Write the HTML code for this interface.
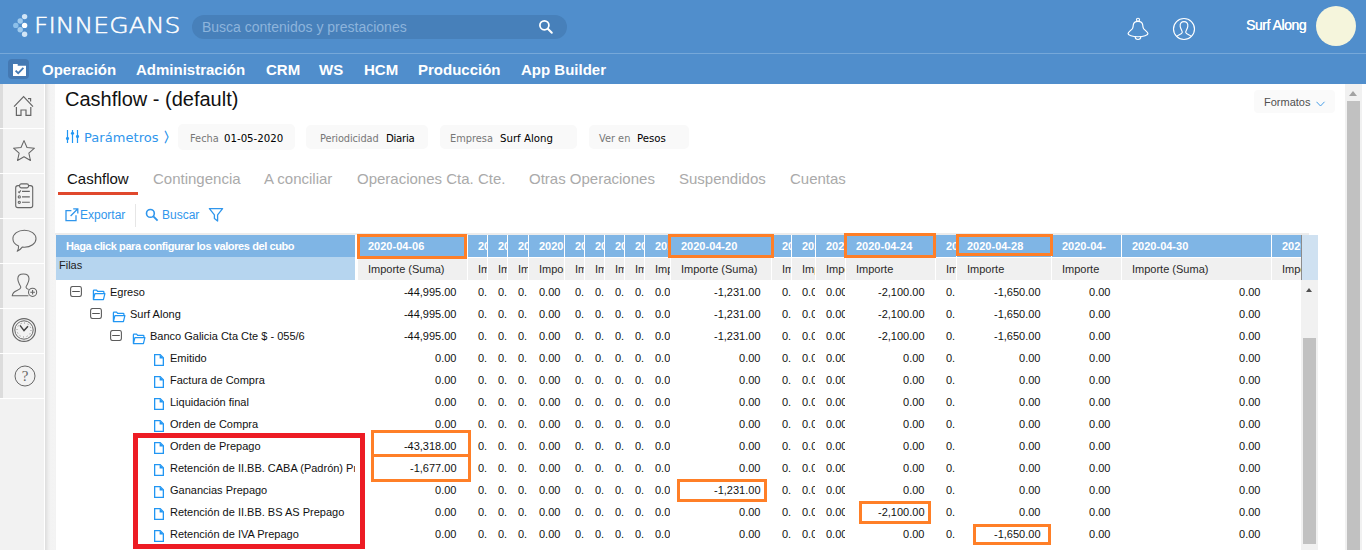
<!DOCTYPE html>
<html lang="es">
<head>
<meta charset="utf-8">
<title>Cashflow - (default)</title>
<style>
html,body{margin:0;padding:0;}
body{width:1366px;height:550px;overflow:hidden;background:#fff;position:relative;font-family:"Liberation Sans",Arial,sans-serif;font-size:12px;color:#111;}
.abs{position:absolute;}
#top{position:absolute;left:0;top:0;width:1366px;height:84px;background:#508ecc;}
#topline{position:absolute;left:0;top:53px;width:1366px;height:1px;background:#76a8d9;}
#logo{position:absolute;left:34px;top:12px;font-family:"DejaVu Sans Light","DejaVu Sans",sans-serif;font-weight:200;font-size:20.4px;line-height:28px;color:#fff;letter-spacing:0px;white-space:nowrap;transform:scaleX(1.23);transform-origin:0 0;-webkit-text-stroke:0.45px #fff;}
#search{position:absolute;left:192px;top:15px;width:375px;height:24px;border-radius:12px;background:#4780ba;}
#search span{position:absolute;left:10px;top:0;line-height:24px;font-size:14px;color:#8db4dc;white-space:nowrap;}
#nav{position:absolute;left:42px;top:54px;height:30px;line-height:31px;font-weight:bold;font-size:15px;color:#fff;white-space:nowrap;}
#nav span{position:absolute;top:0;}
#chk{position:absolute;left:8px;top:59px;width:21px;height:20px;border-radius:4px;background:#4479b3;}
#uname{position:absolute;left:1246px;top:16px;font-size:14px;line-height:18px;color:#fff;white-space:nowrap;letter-spacing:-0.45px;text-shadow:0.15px 0 0 #fff;}
#avatar{position:absolute;left:1316px;top:6px;width:40px;height:40px;border-radius:50%;background:#f5f5dc;}
/* sidebar */
#side{position:absolute;left:0;top:84px;width:44px;height:466px;background:#f2f2f2;}
#sidestrip{position:absolute;left:0;top:84px;width:3px;height:314px;background:#dcdcdc;}
#sideshadow{position:absolute;left:44px;top:84px;width:11px;height:466px;background:linear-gradient(to right,#fff 0,#fff 1px,#dedede 1px,#e4e4e4 2.5px,#eeeeee 4.5px,#f3f3f3 6.5px,#f4f4f4 11px);}
.sline{position:absolute;left:0;width:44px;height:1px;background:#fff;}
.sico{position:absolute;left:3px;width:41px;height:44px;}
/* title */
#title{position:absolute;left:65px;top:86px;font-size:20px;line-height:26px;color:#111;white-space:nowrap;}
#fmt{position:absolute;left:1254px;top:90px;width:81px;height:23px;border-radius:4px;background:#fafafa;}
#fmt span{position:absolute;left:10px;top:0;line-height:24px;font-size:11px;color:#505050;}
.vd{font-family:"DejaVu Sans",Verdana,sans-serif;}
#params{position:absolute;left:84px;top:129px;font-size:13px;line-height:18px;color:#3096ec;white-space:nowrap;letter-spacing:0.05px;}
#params i{font-style:normal;position:absolute;left:78.5px;top:-1px;font-size:14px;-webkit-text-stroke:0.5px #3096ec;}
.chip{position:absolute;top:125px;height:24px;border-radius:5px;background:#f9f9f9;}
.chip .k{position:absolute;top:0;line-height:28px;font-size:9.8px;color:#777;white-space:nowrap;}
.chip .v{position:absolute;top:0;line-height:28px;font-size:10.2px;color:#000;white-space:nowrap;}
.tab{position:absolute;top:169px;font-size:15px;line-height:20px;color:#aaa;white-space:nowrap;}
#tabline{position:absolute;left:58px;top:192px;width:80px;height:3px;background:#e0482d;}
.tb{position:absolute;top:207px;font-size:12px;line-height:17px;color:#3096ec;white-space:nowrap;}
#tbsep{position:absolute;left:135px;top:204px;width:1px;height:23px;background:#e6e6e6;}
/* grid */
#gtop{position:absolute;left:55px;top:233px;width:1254px;height:2px;background:#ececec;}
#gh1{position:absolute;left:56px;top:235px;width:299px;height:22px;background:#7fb5e5;color:#fff;font-weight:bold;font-size:11px;line-height:22px;letter-spacing:-0.4px;}
#gh1 span{position:absolute;left:10px;white-space:nowrap;}
#gh2{position:absolute;left:56px;top:257px;width:299px;height:23px;background:#b6d5ef;font-size:11px;}
#gh2 span{position:absolute;left:3px;top:1px;line-height:14px;color:#222;}
.h1{position:absolute;top:235px;height:22px;line-height:22px;background:#7fb5e5;color:#fff;font-weight:bold;font-size:11px;overflow:hidden;}
.h1 span,.h2 span{display:block;margin:0 10px;}
.h2{position:absolute;top:258px;height:22px;line-height:23px;background:#f0f0f0;color:#2a2a2a;font-size:11px;overflow:hidden;white-space:nowrap;}
#corner{position:absolute;left:1301px;top:235px;width:17px;height:46px;background:#cfe1f1;border-left:1px solid #8c8c8c;border-bottom:1px solid #a3c6e6;box-sizing:border-box;}
.row{position:absolute;left:0;width:1301px;height:22px;font-size:11px;}
.row .lbl{position:absolute;top:0;height:22px;line-height:22px;overflow:hidden;white-space:nowrap;color:#111;}
.row .c{position:absolute;top:0;height:22px;line-height:22px;overflow:hidden;white-space:nowrap;box-sizing:border-box;padding-left:10px;color:#111;}
.row .c.w{text-align:right;padding-right:10.5px;}
.exp{position:absolute;top:5px;}
.fold{position:absolute;top:8px;}
.file{position:absolute;top:7px;}
.ob{position:absolute;box-sizing:border-box;border:3px solid #ff7f27;}
#red{position:absolute;left:133px;top:433px;width:232px;height:116px;box-sizing:border-box;border:5px solid #ed1c24;}
/* scrollbars */
#isb{position:absolute;left:1301px;top:280px;width:17px;height:270px;background:#f1f1f1;}
#isbthumb{position:absolute;left:1303px;top:338px;width:13px;height:206px;background:#c1c1c1;}
#msb{position:absolute;left:1345px;top:84px;width:17px;height:466px;background:#f1f1f1;}
#msbthumb{position:absolute;left:1347px;top:101px;width:13px;height:449px;background:#c1c1c1;}
.arr{position:absolute;width:0;height:0;border-left:4px solid transparent;border-right:4px solid transparent;}
</style>
</head>
<body>
<div id="top"></div>
<div id="topline"></div>
<svg class="abs" style="left:12px;top:12px" width="18" height="28" viewBox="0 0 18 28">
  <circle cx="12.6" cy="4.6" r="2.7" fill="#d2e5f6"/>
  <circle cx="8.2" cy="9" r="2.7" fill="#a0cbee"/>
  <circle cx="3.8" cy="13.4" r="2.7" fill="#8dc0ea"/>
  <circle cx="12.6" cy="13.4" r="2.7" fill="#ffffff"/>
  <circle cx="8.2" cy="17.8" r="2.7" fill="#a0cbee"/>
  <circle cx="12.6" cy="22.2" r="2.7" fill="#d2e5f6"/>
</svg>
<div id="logo">FINNEGANS</div>
<div id="search"><span>Busca contenidos y prestaciones</span>
<svg class="abs" style="left:346px;top:4px" width="16" height="16" viewBox="0 0 16 16"><circle cx="6.4" cy="6.3" r="4.5" fill="none" stroke="#fff" stroke-width="1.75"/><path d="M9.8 9.7L13.8 13.7" stroke="#fff" stroke-width="2" stroke-linecap="round"/></svg>
</div>
<svg class="abs" style="left:1120px;top:10px" width="84" height="36" viewBox="1120 10 84 36" fill="none" stroke="#fff" stroke-width="1.15" stroke-linejoin="round">
<circle cx="1138" cy="19.8" r="1.55"/>
<path d="M1138 21.3C1135.6 21.3 1133.6 22.6 1133.3 24.8C1133 26.8 1133.2 27.6 1132.2 28.8C1130.6 30.6 1128.4 32 1128.1 33.4C1127.8 35.2 1132.4 36.7 1138 36.7C1143.6 36.7 1148.2 35.2 1147.9 33.4C1147.6 32 1145.4 30.6 1143.8 28.8C1142.8 27.6 1143 26.8 1142.7 24.8C1142.4 22.6 1140.4 21.3 1138 21.3Z"/>
<path d="M1135.2 36.8C1135.2 40.4 1140.8 40.4 1140.8 36.8"/>
<circle cx="1184" cy="29" r="10.5"/>
<path d="M1176.7 36.3C1178.4 34.8 1181.6 34.2 1182.2 32.6C1182.7 31.2 1180.6 29.4 1180.2 26.4C1179.8 23.4 1181.4 21.6 1184 21.6C1186.6 21.6 1188.2 23.4 1187.8 26.4C1187.4 29.4 1185.3 31.2 1185.8 32.6C1186.4 34.2 1189.6 34.8 1191.3 36.3"/>
</svg>
<div id="uname">Surf Along</div>
<div id="avatar"></div>
<div id="chk"></div>
<svg class="abs" style="left:13px;top:64px" width="13" height="12" viewBox="0 0 13 12"><path d="M0 0H4.7V1.7H13V12H0Z" fill="#fff"/><path d="M2.6 6.6L5.2 9.2L10.4 3.8" fill="none" stroke="#4479b3" stroke-width="1.8"/></svg>
<div id="nav"><span style="left:0">Operación</span><span style="left:94px">Administración</span><span style="left:224px">CRM</span><span style="left:277px">WS</span><span style="left:322px">HCM</span><span style="left:376px">Producción</span><span style="left:479px">App Builder</span></div>

<div id="side"></div>
<div id="sidestrip"></div>
<div id="sideshadow"></div>
<div class="sline" style="top:128px"></div>
<div class="sline" style="top:173px"></div>
<div class="sline" style="top:218px"></div>
<div class="sline" style="top:263px"></div>
<div class="sline" style="top:308px"></div>
<div class="sline" style="top:353px"></div>
<div class="sline" style="top:398px"></div>
<!-- sidebar icons -->
<svg class="abs" style="left:12px;top:94px" width="24" height="24" viewBox="0 0 24 24" fill="none" stroke="#666" stroke-width="1.2"><path d="M2 12.6L11.6 2.6L21 12.6"/><path d="M4.4 13V21.4H9V16H14V21.4H18.8V13"/><path d="M16 4.6H18.6V7.4"/></svg>
<svg class="abs" style="left:11px;top:138px" width="26" height="26" viewBox="0 0 26 26" fill="none" stroke="#666" stroke-width="1.05" stroke-linejoin="round"><path d="M13.00 2.60L16.00 9.47L23.46 10.20L17.85 15.18L19.47 22.50L13.00 18.70L6.53 22.50L8.15 15.18L2.54 10.20L10.00 9.47Z"/></svg>
<svg class="abs" style="left:14px;top:183px" width="20" height="26" viewBox="0 0 20 26" fill="none" stroke="#666" stroke-width="1.1"><rect x="1.7" y="2.6" width="17" height="22" rx="2.2"/><rect x="5.6" y="0.9" width="8.9" height="4" rx="1.6" fill="#f2f2f2"/><path d="M4.2 8.6L5.2 9.6L6.8 7.4M8 8.4H15.8M8 13.9H15.8M8 19.3H15.8"/><circle cx="5.3" cy="13.9" r="1.1"/><circle cx="5.3" cy="19.3" r="1.1"/></svg>
<svg class="abs" style="left:4px;top:220px" width="40" height="86" viewBox="4 220 40 86" fill="none" stroke="#666" stroke-width="1.05" stroke-linejoin="round"><path d="M18.6 245.9C14.8 244.4 12.9 241.8 12.9 238.7C12.9 234 18 230.2 24.4 230.2C30.8 230.2 36 234 36 238.7C36 243.4 30.8 247.2 24.4 247.2C23.6 247.2 22.9 247.2 22.2 247.1C21 248.8 19.4 250.4 17.2 251.2C18.2 249.6 18.7 247.6 18.6 245.9Z"/><path d="M28.4 295.8H12.2C12.6 292.4 14.4 291.4 17 290.4C19.2 289.6 20.6 288.8 20.8 287.2C20.9 286.4 20.2 285.6 19.4 284.2C18.4 282.4 17.8 280.4 17.8 278.8C17.8 275.8 20.2 274 23.4 274C26.6 274 29 275.8 29 278.8C29 280.4 28.4 282.4 27.4 284.2C26.6 285.6 25.9 286.4 26 287.2C26.1 288.2 27 288.8 28.6 289.4"/><circle cx="32.6" cy="292.3" r="4.1" fill="#f2f2f2"/><path d="M30.3 292.3H34.9M32.6 290V294.6" stroke-width="1.1"/></svg>
<svg class="abs" style="left:11.4px;top:317.4px" width="26" height="26" viewBox="0 0 26 26" fill="none" stroke="#666"><circle cx="13" cy="13" r="11.4" stroke-width="1.2"/><circle cx="13" cy="13" r="9.2" stroke-width="1"/><path d="M9 8.4L13 13.6L17 9.2" stroke-width="1.5" stroke="#444"/><circle cx="13" cy="13" r="7" stroke-width="1" stroke-dasharray="0.8 2.87"/></svg>
<svg class="abs" style="left:13px;top:363.6px" width="24" height="24" viewBox="0 0 24 24" fill="none" stroke="#666" stroke-width="1"><circle cx="12" cy="12" r="10"/></svg>
<div class="abs" style="left:13px;top:363.6px;width:24px;height:24px;line-height:25px;text-align:center;font-family:'Liberation Serif',serif;font-size:15px;color:#666;">?</div>

<div id="title">Cashflow - (default)</div>
<div id="fmt"><span>Formatos</span><svg class="abs" style="left:62px;top:10.5px" width="10" height="7" viewBox="0 0 10 7"><path d="M0.5 0.8L4.5 5L8.5 0.8" fill="none" stroke="#3f9ae6" stroke-width="0.95"/></svg></div>

<svg class="abs" style="left:60px;top:122px" width="24" height="24" viewBox="0 0 24 24" stroke="#2196f3" fill="none" stroke-width="1.2"><path d="M7.5 8V21M12.5 8V21M17.5 8V21"/><circle cx="7.5" cy="16.4" r="1.55" fill="#2196f3" stroke="none"/><circle cx="12.5" cy="11.3" r="1.55" fill="#2196f3" stroke="none"/><circle cx="17.5" cy="14.4" r="1.55" fill="#2196f3" stroke="none"/></svg>
<div id="params" class="vd">Parámetros <i>〉</i></div>
<div class="chip vd" style="left:178px;width:117px;top:124px;height:26px"><span class="k" style="left:12px;line-height:30px">Fecha</span><span class="v" style="left:46px;line-height:30px">01-05-2020</span></div>
<div class="chip vd" style="left:306px;width:122px"><span class="k" style="left:14px;letter-spacing:-0.1px">Periodicidad</span><span class="v" style="left:80px;letter-spacing:-0.3px">Diaria</span></div>
<div class="chip vd" style="left:440px;width:137px"><span class="k" style="left:10px">Empresa</span><span class="v" style="left:60px">Surf Along</span></div>
<div class="chip vd" style="left:589px;width:100px"><span class="k" style="left:10px">Ver en</span><span class="v" style="left:48px">Pesos</span></div>

<div class="tab" style="left:67px;color:#111">Cashflow</div>
<div class="tab" style="left:153px">Contingencia</div>
<div class="tab" style="left:264px">A conciliar</div>
<div class="tab" style="left:357px">Operaciones Cta. Cte.</div>
<div class="tab" style="left:529px">Otras Operaciones</div>
<div class="tab" style="left:679px">Suspendidos</div>
<div class="tab" style="left:790px">Cuentas</div>
<div id="tabline"></div>

<svg class="abs" style="left:65px;top:208px" width="14" height="14" viewBox="0 0 14 14" fill="none" stroke="#3096ec" stroke-width="1.3"><path d="M6.4 2.6H1V12.6H11V7.2"/><path d="M5.6 8L12.6 1M8.2 0.8H12.8V5.4"/></svg>
<div class="tb" style="left:80px">Exportar</div>
<div id="tbsep"></div>
<svg class="abs" style="left:145px;top:208px" width="14" height="14" viewBox="0 0 14 14" fill="none" stroke="#3096ec"><circle cx="5.4" cy="5.4" r="3.9" stroke-width="1.6"/><path d="M8.4 8.4L12.6 12.6" stroke-width="1.9"/></svg>
<div class="tb" style="left:162px">Buscar</div>
<svg class="abs" style="left:208px;top:207px" width="16" height="16" viewBox="0 0 16 16" fill="none" stroke="#3096ec" stroke-width="1.3" stroke-linejoin="round"><path d="M1.4 1.6H14.6L9.6 7.8V14L6.4 11.6V7.8Z"/></svg>

<div class="abs" style="left:55px;top:235px;width:1px;height:315px;background:#f3f3f3"></div>
<div id="gtop"></div>
<div id="gh1"><span>Haga click para configurar los valores del cubo</span></div>
<div id="gh2"><span>Filas</span></div>
<div class="h1" style="left:358px;width:109px"><span>2020-04-06</span></div>
<div class="h2" style="left:358px;width:109px"><span>Importe (Suma)</span></div>
<div class="h1" style="left:468px;width:19px"><span>2020-04-07</span></div>
<div class="h2" style="left:468px;width:19px"><span>Importe (Suma)</span></div>
<div class="h1" style="left:488px;width:19px"><span>2020-04-08</span></div>
<div class="h2" style="left:488px;width:19px"><span>Importe (Suma)</span></div>
<div class="h1" style="left:508px;width:20px"><span>2020-04-09</span></div>
<div class="h2" style="left:508px;width:20px"><span>Importe (Suma)</span></div>
<div class="h1" style="left:529px;width:35px"><span>2020-04-13</span></div>
<div class="h2" style="left:529px;width:35px"><span>Importe (Suma)</span></div>
<div class="h1" style="left:565px;width:19px"><span>2020-04-14</span></div>
<div class="h2" style="left:565px;width:19px"><span>Importe (Suma)</span></div>
<div class="h1" style="left:585px;width:19px"><span>2020-04-15</span></div>
<div class="h2" style="left:585px;width:19px"><span>Importe (Suma)</span></div>
<div class="h1" style="left:605px;width:19px"><span>2020-04-16</span></div>
<div class="h2" style="left:605px;width:19px"><span>Importe (Suma)</span></div>
<div class="h1" style="left:625px;width:19px"><span>2020-04-17</span></div>
<div class="h2" style="left:625px;width:19px"><span>Importe (Suma)</span></div>
<div class="h1" style="left:645px;width:25px"><span>2020-04-19</span></div>
<div class="h2" style="left:645px;width:25px"><span>Importe (Suma)</span></div>
<div class="h1" style="left:671px;width:100px"><span>2020-04-20</span></div>
<div class="h2" style="left:671px;width:100px"><span>Importe (Suma)</span></div>
<div class="h1" style="left:772px;width:19px"><span>2020-04-21</span></div>
<div class="h2" style="left:772px;width:19px"><span>Importe (Suma)</span></div>
<div class="h1" style="left:792px;width:23px"><span>2020-04-22</span></div>
<div class="h2" style="left:792px;width:23px"><span>Importe (Suma)</span></div>
<div class="h1" style="left:816px;width:29px"><span>2020-04-23</span></div>
<div class="h2" style="left:816px;width:29px"><span>Importe (Suma)</span></div>
<div class="h1" style="left:846px;width:89px"><span>2020-04-24</span></div>
<div class="h2" style="left:846px;width:89px"><span>Importe</span></div>
<div class="h1" style="left:936px;width:20px"><span>2020-04-27</span></div>
<div class="h2" style="left:936px;width:20px"><span>Importe</span></div>
<div class="h1" style="left:957px;width:94px"><span>2020-04-28</span></div>
<div class="h2" style="left:957px;width:94px"><span>Importe</span></div>
<div class="h1" style="left:1052px;width:69px"><span>2020-04-29</span></div>
<div class="h2" style="left:1052px;width:69px"><span>Importe</span></div>
<div class="h1" style="left:1122px;width:149px"><span>2020-04-30</span></div>
<div class="h2" style="left:1122px;width:149px"><span>Importe (Suma)</span></div>
<div class="h1" style="left:1272px;width:29px"><span>2020-05-04</span></div>
<div class="h2" style="left:1272px;width:29px"><span>Importe (Suma)</span></div>
<div class="row" style="top:281px">
<svg class="exp" style="left:70px" width="12" height="11" viewBox="0 0 12 11"><rect x="0.6" y="0.5" width="10.8" height="10" rx="2" fill="#fff" stroke="#5c5c5c" stroke-width="1.1"/><path d="M2.2 5.5H9.8" stroke="#555" stroke-width="1"/></svg>
<svg class="fold" style="left:92px" width="14" height="12" viewBox="0 0 14 12"><path d="M1.4 10.6V1.8Q1.4 1.1 2.1 1.1H4.6L5.6 2.3H11.2Q11.9 2.3 11.9 3V4.4M1.4 10.6L2.9 4.6H12.9L11.4 10.6Z" fill="none" stroke="#2196f3" stroke-width="1.25" stroke-linejoin="round"/></svg>
<div class="lbl" style="left:110px;width:245px">Egreso</div>
<div class="c w" style="left:358px;width:109px">-44,995.00</div>
<div class="c" style="left:468px;width:19px">0.00</div>
<div class="c" style="left:488px;width:19px">0.00</div>
<div class="c" style="left:508px;width:19px">0.00</div>
<div class="c" style="left:529px;width:35px">0.00</div>
<div class="c" style="left:565px;width:19px">0.00</div>
<div class="c" style="left:585px;width:19px">0.00</div>
<div class="c" style="left:605px;width:19px">0.00</div>
<div class="c" style="left:625px;width:19px">0.00</div>
<div class="c" style="left:645px;width:25px">0.00</div>
<div class="c w" style="left:671px;width:100px">-1,231.00</div>
<div class="c" style="left:772px;width:19px">0.00</div>
<div class="c" style="left:792px;width:23px">0.00</div>
<div class="c" style="left:816px;width:29px">0.00</div>
<div class="c w" style="left:846px;width:89px">-2,100.00</div>
<div class="c" style="left:936px;width:19px">0.00</div>
<div class="c w" style="left:957px;width:94px">-1,650.00</div>
<div class="c w" style="left:1052px;width:69px">0.00</div>
<div class="c w" style="left:1122px;width:149px">0.00</div>
</div>
<div class="row" style="top:303px">
<svg class="exp" style="left:90px" width="12" height="11" viewBox="0 0 12 11"><rect x="0.6" y="0.5" width="10.8" height="10" rx="2" fill="#fff" stroke="#5c5c5c" stroke-width="1.1"/><path d="M2.2 5.5H9.8" stroke="#555" stroke-width="1"/></svg>
<svg class="fold" style="left:112px" width="14" height="12" viewBox="0 0 14 12"><path d="M1.4 10.6V1.8Q1.4 1.1 2.1 1.1H4.6L5.6 2.3H11.2Q11.9 2.3 11.9 3V4.4M1.4 10.6L2.9 4.6H12.9L11.4 10.6Z" fill="none" stroke="#2196f3" stroke-width="1.25" stroke-linejoin="round"/></svg>
<div class="lbl" style="left:130px;width:225px">Surf Along</div>
<div class="c w" style="left:358px;width:109px">-44,995.00</div>
<div class="c" style="left:468px;width:19px">0.00</div>
<div class="c" style="left:488px;width:19px">0.00</div>
<div class="c" style="left:508px;width:19px">0.00</div>
<div class="c" style="left:529px;width:35px">0.00</div>
<div class="c" style="left:565px;width:19px">0.00</div>
<div class="c" style="left:585px;width:19px">0.00</div>
<div class="c" style="left:605px;width:19px">0.00</div>
<div class="c" style="left:625px;width:19px">0.00</div>
<div class="c" style="left:645px;width:25px">0.00</div>
<div class="c w" style="left:671px;width:100px">-1,231.00</div>
<div class="c" style="left:772px;width:19px">0.00</div>
<div class="c" style="left:792px;width:23px">0.00</div>
<div class="c" style="left:816px;width:29px">0.00</div>
<div class="c w" style="left:846px;width:89px">-2,100.00</div>
<div class="c" style="left:936px;width:19px">0.00</div>
<div class="c w" style="left:957px;width:94px">-1,650.00</div>
<div class="c w" style="left:1052px;width:69px">0.00</div>
<div class="c w" style="left:1122px;width:149px">0.00</div>
</div>
<div class="row" style="top:325px">
<svg class="exp" style="left:110px" width="12" height="11" viewBox="0 0 12 11"><rect x="0.6" y="0.5" width="10.8" height="10" rx="2" fill="#fff" stroke="#5c5c5c" stroke-width="1.1"/><path d="M2.2 5.5H9.8" stroke="#555" stroke-width="1"/></svg>
<svg class="fold" style="left:132px" width="14" height="12" viewBox="0 0 14 12"><path d="M1.4 10.6V1.8Q1.4 1.1 2.1 1.1H4.6L5.6 2.3H11.2Q11.9 2.3 11.9 3V4.4M1.4 10.6L2.9 4.6H12.9L11.4 10.6Z" fill="none" stroke="#2196f3" stroke-width="1.25" stroke-linejoin="round"/></svg>
<div class="lbl" style="left:150px;width:205px">Banco Galicia Cta Cte $ - 055/6</div>
<div class="c w" style="left:358px;width:109px">-44,995.00</div>
<div class="c" style="left:468px;width:19px">0.00</div>
<div class="c" style="left:488px;width:19px">0.00</div>
<div class="c" style="left:508px;width:19px">0.00</div>
<div class="c" style="left:529px;width:35px">0.00</div>
<div class="c" style="left:565px;width:19px">0.00</div>
<div class="c" style="left:585px;width:19px">0.00</div>
<div class="c" style="left:605px;width:19px">0.00</div>
<div class="c" style="left:625px;width:19px">0.00</div>
<div class="c" style="left:645px;width:25px">0.00</div>
<div class="c w" style="left:671px;width:100px">-1,231.00</div>
<div class="c" style="left:772px;width:19px">0.00</div>
<div class="c" style="left:792px;width:23px">0.00</div>
<div class="c" style="left:816px;width:29px">0.00</div>
<div class="c w" style="left:846px;width:89px">-2,100.00</div>
<div class="c" style="left:936px;width:19px">0.00</div>
<div class="c w" style="left:957px;width:94px">-1,650.00</div>
<div class="c w" style="left:1052px;width:69px">0.00</div>
<div class="c w" style="left:1122px;width:149px">0.00</div>
</div>
<div class="row" style="top:347px">
<svg class="file" style="left:154px" width="10" height="12" viewBox="0 0 10 12"><path d="M0.65 0.65H6.2L9.35 3.8V11.35H0.65Z" fill="#fff" stroke="#2196f3" stroke-width="1.3" stroke-linejoin="miter"/><path d="M5.6 0.6L9.4 4.4H5.6Z" fill="#2196f3"/></svg>
<div class="lbl" style="left:170px;width:185px">Emitido</div>
<div class="c w" style="left:358px;width:109px">0.00</div>
<div class="c" style="left:468px;width:19px">0.00</div>
<div class="c" style="left:488px;width:19px">0.00</div>
<div class="c" style="left:508px;width:19px">0.00</div>
<div class="c" style="left:529px;width:35px">0.00</div>
<div class="c" style="left:565px;width:19px">0.00</div>
<div class="c" style="left:585px;width:19px">0.00</div>
<div class="c" style="left:605px;width:19px">0.00</div>
<div class="c" style="left:625px;width:19px">0.00</div>
<div class="c" style="left:645px;width:25px">0.00</div>
<div class="c w" style="left:671px;width:100px">0.00</div>
<div class="c" style="left:772px;width:19px">0.00</div>
<div class="c" style="left:792px;width:23px">0.00</div>
<div class="c" style="left:816px;width:29px">0.00</div>
<div class="c w" style="left:846px;width:89px">0.00</div>
<div class="c" style="left:936px;width:19px">0.00</div>
<div class="c w" style="left:957px;width:94px">0.00</div>
<div class="c w" style="left:1052px;width:69px">0.00</div>
<div class="c w" style="left:1122px;width:149px">0.00</div>
</div>
<div class="row" style="top:369px">
<svg class="file" style="left:154px" width="10" height="12" viewBox="0 0 10 12"><path d="M0.65 0.65H6.2L9.35 3.8V11.35H0.65Z" fill="#fff" stroke="#2196f3" stroke-width="1.3" stroke-linejoin="miter"/><path d="M5.6 0.6L9.4 4.4H5.6Z" fill="#2196f3"/></svg>
<div class="lbl" style="left:170px;width:185px">Factura de Compra</div>
<div class="c w" style="left:358px;width:109px">0.00</div>
<div class="c" style="left:468px;width:19px">0.00</div>
<div class="c" style="left:488px;width:19px">0.00</div>
<div class="c" style="left:508px;width:19px">0.00</div>
<div class="c" style="left:529px;width:35px">0.00</div>
<div class="c" style="left:565px;width:19px">0.00</div>
<div class="c" style="left:585px;width:19px">0.00</div>
<div class="c" style="left:605px;width:19px">0.00</div>
<div class="c" style="left:625px;width:19px">0.00</div>
<div class="c" style="left:645px;width:25px">0.00</div>
<div class="c w" style="left:671px;width:100px">0.00</div>
<div class="c" style="left:772px;width:19px">0.00</div>
<div class="c" style="left:792px;width:23px">0.00</div>
<div class="c" style="left:816px;width:29px">0.00</div>
<div class="c w" style="left:846px;width:89px">0.00</div>
<div class="c" style="left:936px;width:19px">0.00</div>
<div class="c w" style="left:957px;width:94px">0.00</div>
<div class="c w" style="left:1052px;width:69px">0.00</div>
<div class="c w" style="left:1122px;width:149px">0.00</div>
</div>
<div class="row" style="top:391px">
<svg class="file" style="left:154px" width="10" height="12" viewBox="0 0 10 12"><path d="M0.65 0.65H6.2L9.35 3.8V11.35H0.65Z" fill="#fff" stroke="#2196f3" stroke-width="1.3" stroke-linejoin="miter"/><path d="M5.6 0.6L9.4 4.4H5.6Z" fill="#2196f3"/></svg>
<div class="lbl" style="left:170px;width:185px">Liquidación final</div>
<div class="c w" style="left:358px;width:109px">0.00</div>
<div class="c" style="left:468px;width:19px">0.00</div>
<div class="c" style="left:488px;width:19px">0.00</div>
<div class="c" style="left:508px;width:19px">0.00</div>
<div class="c" style="left:529px;width:35px">0.00</div>
<div class="c" style="left:565px;width:19px">0.00</div>
<div class="c" style="left:585px;width:19px">0.00</div>
<div class="c" style="left:605px;width:19px">0.00</div>
<div class="c" style="left:625px;width:19px">0.00</div>
<div class="c" style="left:645px;width:25px">0.00</div>
<div class="c w" style="left:671px;width:100px">0.00</div>
<div class="c" style="left:772px;width:19px">0.00</div>
<div class="c" style="left:792px;width:23px">0.00</div>
<div class="c" style="left:816px;width:29px">0.00</div>
<div class="c w" style="left:846px;width:89px">0.00</div>
<div class="c" style="left:936px;width:19px">0.00</div>
<div class="c w" style="left:957px;width:94px">0.00</div>
<div class="c w" style="left:1052px;width:69px">0.00</div>
<div class="c w" style="left:1122px;width:149px">0.00</div>
</div>
<div class="row" style="top:413px">
<svg class="file" style="left:154px" width="10" height="12" viewBox="0 0 10 12"><path d="M0.65 0.65H6.2L9.35 3.8V11.35H0.65Z" fill="#fff" stroke="#2196f3" stroke-width="1.3" stroke-linejoin="miter"/><path d="M5.6 0.6L9.4 4.4H5.6Z" fill="#2196f3"/></svg>
<div class="lbl" style="left:170px;width:185px">Orden de Compra</div>
<div class="c w" style="left:358px;width:109px">0.00</div>
<div class="c" style="left:468px;width:19px">0.00</div>
<div class="c" style="left:488px;width:19px">0.00</div>
<div class="c" style="left:508px;width:19px">0.00</div>
<div class="c" style="left:529px;width:35px">0.00</div>
<div class="c" style="left:565px;width:19px">0.00</div>
<div class="c" style="left:585px;width:19px">0.00</div>
<div class="c" style="left:605px;width:19px">0.00</div>
<div class="c" style="left:625px;width:19px">0.00</div>
<div class="c" style="left:645px;width:25px">0.00</div>
<div class="c w" style="left:671px;width:100px">0.00</div>
<div class="c" style="left:772px;width:19px">0.00</div>
<div class="c" style="left:792px;width:23px">0.00</div>
<div class="c" style="left:816px;width:29px">0.00</div>
<div class="c w" style="left:846px;width:89px">0.00</div>
<div class="c" style="left:936px;width:19px">0.00</div>
<div class="c w" style="left:957px;width:94px">0.00</div>
<div class="c w" style="left:1052px;width:69px">0.00</div>
<div class="c w" style="left:1122px;width:149px">0.00</div>
</div>
<div class="row" style="top:435px">
<svg class="file" style="left:154px" width="10" height="12" viewBox="0 0 10 12"><path d="M0.65 0.65H6.2L9.35 3.8V11.35H0.65Z" fill="#fff" stroke="#2196f3" stroke-width="1.3" stroke-linejoin="miter"/><path d="M5.6 0.6L9.4 4.4H5.6Z" fill="#2196f3"/></svg>
<div class="lbl" style="left:170px;width:185px">Orden de Prepago</div>
<div class="c w" style="left:358px;width:109px">-43,318.00</div>
<div class="c" style="left:468px;width:19px">0.00</div>
<div class="c" style="left:488px;width:19px">0.00</div>
<div class="c" style="left:508px;width:19px">0.00</div>
<div class="c" style="left:529px;width:35px">0.00</div>
<div class="c" style="left:565px;width:19px">0.00</div>
<div class="c" style="left:585px;width:19px">0.00</div>
<div class="c" style="left:605px;width:19px">0.00</div>
<div class="c" style="left:625px;width:19px">0.00</div>
<div class="c" style="left:645px;width:25px">0.00</div>
<div class="c w" style="left:671px;width:100px">0.00</div>
<div class="c" style="left:772px;width:19px">0.00</div>
<div class="c" style="left:792px;width:23px">0.00</div>
<div class="c" style="left:816px;width:29px">0.00</div>
<div class="c w" style="left:846px;width:89px">0.00</div>
<div class="c" style="left:936px;width:19px">0.00</div>
<div class="c w" style="left:957px;width:94px">0.00</div>
<div class="c w" style="left:1052px;width:69px">0.00</div>
<div class="c w" style="left:1122px;width:149px">0.00</div>
</div>
<div class="row" style="top:457px">
<svg class="file" style="left:154px" width="10" height="12" viewBox="0 0 10 12"><path d="M0.65 0.65H6.2L9.35 3.8V11.35H0.65Z" fill="#fff" stroke="#2196f3" stroke-width="1.3" stroke-linejoin="miter"/><path d="M5.6 0.6L9.4 4.4H5.6Z" fill="#2196f3"/></svg>
<div class="lbl" style="left:170px;width:185px">Retención de II.BB. CABA (Padrón) Prepago</div>
<div class="c w" style="left:358px;width:109px">-1,677.00</div>
<div class="c" style="left:468px;width:19px">0.00</div>
<div class="c" style="left:488px;width:19px">0.00</div>
<div class="c" style="left:508px;width:19px">0.00</div>
<div class="c" style="left:529px;width:35px">0.00</div>
<div class="c" style="left:565px;width:19px">0.00</div>
<div class="c" style="left:585px;width:19px">0.00</div>
<div class="c" style="left:605px;width:19px">0.00</div>
<div class="c" style="left:625px;width:19px">0.00</div>
<div class="c" style="left:645px;width:25px">0.00</div>
<div class="c w" style="left:671px;width:100px">0.00</div>
<div class="c" style="left:772px;width:19px">0.00</div>
<div class="c" style="left:792px;width:23px">0.00</div>
<div class="c" style="left:816px;width:29px">0.00</div>
<div class="c w" style="left:846px;width:89px">0.00</div>
<div class="c" style="left:936px;width:19px">0.00</div>
<div class="c w" style="left:957px;width:94px">0.00</div>
<div class="c w" style="left:1052px;width:69px">0.00</div>
<div class="c w" style="left:1122px;width:149px">0.00</div>
</div>
<div class="row" style="top:479px">
<svg class="file" style="left:154px" width="10" height="12" viewBox="0 0 10 12"><path d="M0.65 0.65H6.2L9.35 3.8V11.35H0.65Z" fill="#fff" stroke="#2196f3" stroke-width="1.3" stroke-linejoin="miter"/><path d="M5.6 0.6L9.4 4.4H5.6Z" fill="#2196f3"/></svg>
<div class="lbl" style="left:170px;width:185px">Ganancias Prepago</div>
<div class="c w" style="left:358px;width:109px">0.00</div>
<div class="c" style="left:468px;width:19px">0.00</div>
<div class="c" style="left:488px;width:19px">0.00</div>
<div class="c" style="left:508px;width:19px">0.00</div>
<div class="c" style="left:529px;width:35px">0.00</div>
<div class="c" style="left:565px;width:19px">0.00</div>
<div class="c" style="left:585px;width:19px">0.00</div>
<div class="c" style="left:605px;width:19px">0.00</div>
<div class="c" style="left:625px;width:19px">0.00</div>
<div class="c" style="left:645px;width:25px">0.00</div>
<div class="c w" style="left:671px;width:100px">-1,231.00</div>
<div class="c" style="left:772px;width:19px">0.00</div>
<div class="c" style="left:792px;width:23px">0.00</div>
<div class="c" style="left:816px;width:29px">0.00</div>
<div class="c w" style="left:846px;width:89px">0.00</div>
<div class="c" style="left:936px;width:19px">0.00</div>
<div class="c w" style="left:957px;width:94px">0.00</div>
<div class="c w" style="left:1052px;width:69px">0.00</div>
<div class="c w" style="left:1122px;width:149px">0.00</div>
</div>
<div class="row" style="top:501px">
<svg class="file" style="left:154px" width="10" height="12" viewBox="0 0 10 12"><path d="M0.65 0.65H6.2L9.35 3.8V11.35H0.65Z" fill="#fff" stroke="#2196f3" stroke-width="1.3" stroke-linejoin="miter"/><path d="M5.6 0.6L9.4 4.4H5.6Z" fill="#2196f3"/></svg>
<div class="lbl" style="left:170px;width:185px">Retención de II.BB. BS AS Prepago</div>
<div class="c w" style="left:358px;width:109px">0.00</div>
<div class="c" style="left:468px;width:19px">0.00</div>
<div class="c" style="left:488px;width:19px">0.00</div>
<div class="c" style="left:508px;width:19px">0.00</div>
<div class="c" style="left:529px;width:35px">0.00</div>
<div class="c" style="left:565px;width:19px">0.00</div>
<div class="c" style="left:585px;width:19px">0.00</div>
<div class="c" style="left:605px;width:19px">0.00</div>
<div class="c" style="left:625px;width:19px">0.00</div>
<div class="c" style="left:645px;width:25px">0.00</div>
<div class="c w" style="left:671px;width:100px">0.00</div>
<div class="c" style="left:772px;width:19px">0.00</div>
<div class="c" style="left:792px;width:23px">0.00</div>
<div class="c" style="left:816px;width:29px">0.00</div>
<div class="c w" style="left:846px;width:89px">-2,100.00</div>
<div class="c" style="left:936px;width:19px">0.00</div>
<div class="c w" style="left:957px;width:94px">0.00</div>
<div class="c w" style="left:1052px;width:69px">0.00</div>
<div class="c w" style="left:1122px;width:149px">0.00</div>
</div>
<div class="row" style="top:523px">
<svg class="file" style="left:154px" width="10" height="12" viewBox="0 0 10 12"><path d="M0.65 0.65H6.2L9.35 3.8V11.35H0.65Z" fill="#fff" stroke="#2196f3" stroke-width="1.3" stroke-linejoin="miter"/><path d="M5.6 0.6L9.4 4.4H5.6Z" fill="#2196f3"/></svg>
<div class="lbl" style="left:170px;width:185px">Retención de IVA Prepago</div>
<div class="c w" style="left:358px;width:109px">0.00</div>
<div class="c" style="left:468px;width:19px">0.00</div>
<div class="c" style="left:488px;width:19px">0.00</div>
<div class="c" style="left:508px;width:19px">0.00</div>
<div class="c" style="left:529px;width:35px">0.00</div>
<div class="c" style="left:565px;width:19px">0.00</div>
<div class="c" style="left:585px;width:19px">0.00</div>
<div class="c" style="left:605px;width:19px">0.00</div>
<div class="c" style="left:625px;width:19px">0.00</div>
<div class="c" style="left:645px;width:25px">0.00</div>
<div class="c w" style="left:671px;width:100px">0.00</div>
<div class="c" style="left:772px;width:19px">0.00</div>
<div class="c" style="left:792px;width:23px">0.00</div>
<div class="c" style="left:816px;width:29px">0.00</div>
<div class="c w" style="left:846px;width:89px">0.00</div>
<div class="c" style="left:936px;width:19px">0.00</div>
<div class="c w" style="left:957px;width:94px">-1,650.00</div>
<div class="c w" style="left:1052px;width:69px">0.00</div>
<div class="c w" style="left:1122px;width:149px">0.00</div>
</div>
<div id="corner"></div>
<div id="isb"></div>
<div id="isbthumb"></div>
<div class="arr" style="left:1306px;top:288px;border-left-width:3.5px;border-right-width:3.5px;border-bottom:4px solid #505050;"></div>
<div id="msb"></div>
<div id="msbthumb"></div>
<div class="arr" style="left:1349px;top:91px;border-bottom:5px solid #a3a3a3;"></div>

<div class="ob" style="left:357px;top:234px;width:110px;height:25px"></div>
<div class="ob" style="left:668px;top:234px;width:106px;height:24px"></div>
<div class="ob" style="left:844px;top:233px;width:92px;height:25px"></div>
<div class="ob" style="left:956px;top:234px;width:97px;height:22px"></div>
<div class="ob" style="left:371px;top:430px;width:100px;height:27px"></div>
<div class="ob" style="left:371px;top:454px;width:100px;height:28px"></div>
<div class="ob" style="left:677px;top:479px;width:90px;height:23px"></div>
<div class="ob" style="left:859px;top:501px;width:72px;height:23px"></div>
<div class="ob" style="left:973px;top:524px;width:78px;height:21px"></div>
<div id="red"></div>
</body>
</html>
